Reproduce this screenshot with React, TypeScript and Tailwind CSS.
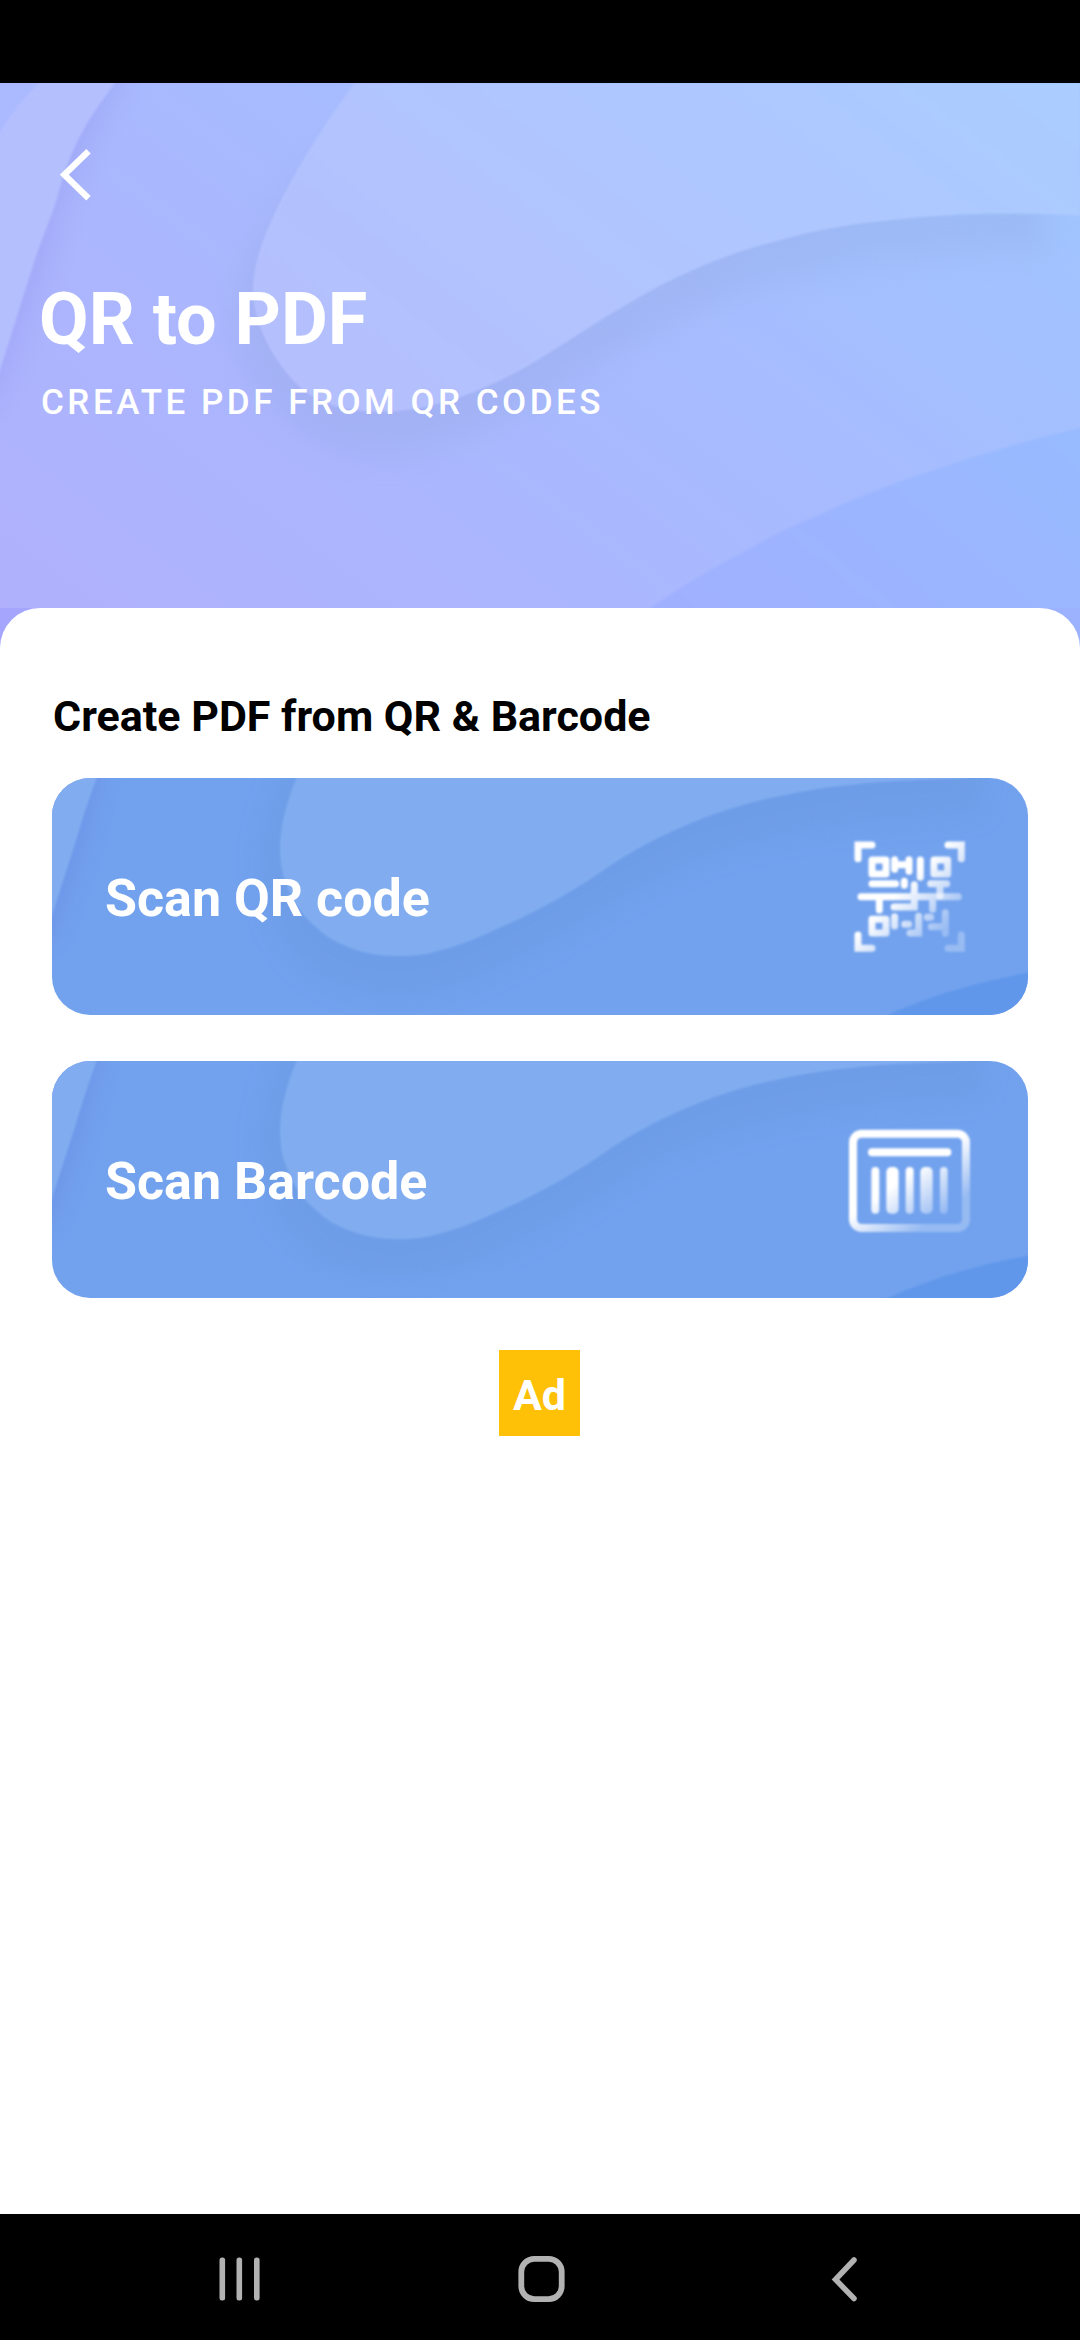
import React from "react";

const BLOB_HEADER =
  "M355 0 C322 42 290 98 274 132 C258 166 253 190 253 208 C254 238 270 276 302 306 C330 328 366 330 396 328 C450 324 503 298 540 275.500 C574 254.500 608 231.500 643 212 C682 190 730 169 781 157 C815 147 850 141 884 138 C925 133 965 130.500 1005 130.500 C1030 130.500 1055 131 1080 133 L1080 0 Z";

const BLOB_CARD =
  "M244.500 -6 L244.500 0 C234 26 228 48 228 72 C229 88 230 94 233 102 C240 124 250 137 264 149 C274 159 284 164 296 169 C311 175 328 178 345 178 C360 178 373 177 386 173 C406 168 428 159 447 150 C468 141 490 130 509 119 C528 108 545 97 562 85 C578 75 592 67 608 59 C627 50 645 42 665 35 C686 28 706 22 728 18 C750 13 774 9 798 7 C822 4 843 3 865 2 L915 0 L915 -6 Z";

function HeaderArt() {
  return (
    <svg className="absolute inset-0 h-full w-full" viewBox="0 0 1080 525" preserveAspectRatio="none" aria-hidden="true">
      <defs>
        <linearGradient id="hBase" gradientUnits="userSpaceOnUse" x1="0" y1="525" x2="641" y2="-330">
          <stop offset="0" stopColor="#b0b0fd" />
          <stop offset="0.5" stopColor="#a8bafe" />
          <stop offset="1" stopColor="#9fc6ff" />
        </linearGradient>
        <linearGradient id="hLow" gradientUnits="userSpaceOnUse" x1="650" y1="525" x2="900" y2="225">
          <stop offset="0" stopColor="#a0b0ff" />
          <stop offset="1" stopColor="#98baff" />
        </linearGradient>
        <filter id="hBlur" x="-20%" y="-30%" width="140%" height="160%">
          <feGaussianBlur stdDeviation="16" />
        </filter>
        <filter id="hBlurS" x="-40%" y="-20%" width="180%" height="140%">
          <feGaussianBlur stdDeviation="17" />
        </filter>
        <filter id="edge">
          <feGaussianBlur stdDeviation="1.300" />
        </filter>
      </defs>
      <rect width="1080" height="525" fill="url(#hBase)" />
      <path
        d="M360 30 C318 80 280 118 260 150 C242 180 232 205 232 232 C234 270 254 312 294 344 C328 370 366 376 396 374 C450 370 503 342 540 319 C574 298 608 275 643 256 C682 233 730 211 781 198 C850 179 925 170 1005 169 L1046 169 L1046 30 Z"
        fill="#8094c8"
        opacity="0.160"
        filter="url(#hBlur)"
      />
      <path d={BLOB_HEADER} fill="url(#hBase)" filter="url(#edge)" />
      <path d={BLOB_HEADER} fill="#ffffff" opacity="0.120" filter="url(#edge)" />
      <path d="M-40 -30 L132 -30 C96 36 70 90 52 150 C38 196 20 250 -10 320 L-40 320 Z" fill="#7d76e0" opacity="0.240" filter="url(#hBlurS)" />
      <path d="M-10 -10 L122 -10 C104 16 94 28 84 46 C68 74 62 98 55 122 C47 145 40 160 34 180 C22 216 12 252 -10 318 Z" fill="#b4bffe" filter="url(#edge)" />
      <path d="M-10 -10 L48 -10 L39 0 C24 16 12 28 0 50 L-10 64 Z" fill="#abbafe" filter="url(#edge)" />
      <path d="M640 531 L650 525 C682 503 714 484 747 467 C770 454 795 441 822 430.500 C853 416 884 404 919 392 C972 374 1028 356 1090 343 L1090 535 Z" fill="url(#hLow)" filter="url(#edge)" />
    </svg>
  );
}

function CardArt({ id }: { id: string }) {
  return (
    <svg className="absolute inset-0 h-full w-full" viewBox="0 0 976 237" preserveAspectRatio="none" aria-hidden="true">
      <defs>
        <filter id={id + "b"} x="-20%" y="-40%" width="140%" height="180%">
          <feGaussianBlur stdDeviation="14" />
        </filter>
        <filter id={id + "c"} x="-60%" y="-20%" width="220%" height="140%">
          <feGaussianBlur stdDeviation="10" />
        </filter>
        <filter id={id + "e"}>
          <feGaussianBlur stdDeviation="1.100" />
        </filter>
      </defs>
      <rect width="976" height="237" fill="#72a2ee" />
      <path
        d="M240 -60 L230 0 C216 30 209 60 209 90 C212 134 230 172 260 193 C286 211 320 217 345 217 C380 217 415 205 447 189 C490 169 528 145 562 124 C600 100 640 82 665 74 C740 51 830 37 932 36 L932 -60 Z"
        fill="#5f88c8"
        opacity="0.170"
        filter={`url(#${id}b)`}
      />
      <path d={BLOB_CARD} fill="#81adf0" filter={`url(#${id}e)`} />
      <path d="M-30 -30 L54 -30 C46 30 30 80 2 160 L-30 180 Z" fill="#6a80e0" opacity="0.330" filter={`url(#${id}c)`} />
      <path d="M-8 -8 L47 -8 L44.500 0 C38 18 34 30 29 46 C20 76 10 106 -4 150 L-8 150 Z" fill="#81adf0" filter={`url(#${id}e)`} />
      <path d="M820 242 L836 237 C850 230 865 225 881 219 C910 209 942 201 984 193 L984 245 Z" fill="#6097ea" filter={`url(#${id}e)`} />
    </svg>
  );
}

function QrIcon() {
  return (
    <svg className="mb-[3px] h-[150px] w-[160px]" viewBox="0 0 480 450" fill="none" aria-hidden="true">
      <defs>
        <linearGradient id="qrFade" gradientUnits="userSpaceOnUse" x1="210" y1="210" x2="338" y2="338">
          <stop offset="0" stopColor="#fff" />
          <stop offset="1" stopColor="#fff" stopOpacity="0.270" />
        </linearGradient>
        <filter id="qrSoft" filterUnits="userSpaceOnUse" x="0" y="0" width="480" height="450">
          <feGaussianBlur stdDeviation="2.500" />
        </filter>
      </defs>
      <g filter="url(#qrSoft)">
        <g stroke="url(#qrFade)" strokeWidth="21" strokeLinecap="round" strokeLinejoin="miter">
          <path d="M84 116V75H126M354 75H394V116M84 345V385H126M354 385H394V345" />
          <path d="M126 120H168V162H126ZM312 120H353V162H312ZM126 298H168V339H126Z" strokeLinejoin="round" />
          <path d="M194 119V148M237 119V154M200 134H232M271 120V172M126 191H197M223 184V196" />
          <path d="M302 191H350M330 195V228" />
          <path d="M93 230H385M148 232V270M253 194V261H192M308 232V268" />
          <path d="M194 290V318M224 313H236" />
          <path d="M266 289V339H240M292 292H302" />
          <path d="M346 278V340M304 320H344" />
        </g>
      </g>
    </svg>
  );
}

function BarcodeIcon() {
  return (
    <svg className="h-[140px] w-[160px]" viewBox="0 0 480 420" fill="none" aria-hidden="true">
      <defs>
        <linearGradient id="bcFade" gradientUnits="userSpaceOnUse" x1="235" y1="195" x2="325" y2="320">
          <stop offset="0" stopColor="#fff" />
          <stop offset="1" stopColor="#fff" stopOpacity="0.260" />
        </linearGradient>
        <filter id="bcSoft" filterUnits="userSpaceOnUse" x="0" y="0" width="480" height="420">
          <feGaussianBlur stdDeviation="2.500" />
        </filter>
      </defs>
      <g filter="url(#bcSoft)">
        <rect x="69" y="71" width="339" height="283" rx="26" stroke="url(#bcFade)" strokeWidth="24" />
        <rect x="114" y="115" width="250" height="24" rx="12" fill="#fff" />
        <g fill="url(#bcFade)">
          <rect x="124" y="171" width="24" height="140" rx="12" />
          <rect x="169" y="171" width="37" height="140" rx="15" />
          <rect x="227" y="171" width="24" height="140" rx="12" />
          <rect x="271" y="171" width="37" height="140" rx="15" />
          <rect x="330" y="171" width="23" height="140" rx="12" />
        </g>
      </g>
    </svg>
  );
}

function ScanCard({ id, label, icon }: { id: string; label: string; icon: React.ReactNode }) {
  return (
    <button className="relative flex h-[237px] w-full items-center justify-between overflow-hidden rounded-[38px] pr-[38px] pl-[53px] text-left">
      <CardArt id={id} />
      <span className="relative pt-[4px] text-[52px] leading-[60px] font-bold whitespace-nowrap text-white">{label}</span>
      <span className="relative block">{icon}</span>
    </button>
  );
}

export default function App() {
  return (
    <div className="flex h-[2340px] w-[1080px] flex-col overflow-hidden bg-white font-['Roboto',sans-serif]">
      <div className="h-[83px] shrink-0 bg-black" />
      <div className="flex flex-1 flex-col bg-linear-to-r from-[#a5a5fd] to-[#9cb2ff]">
        <header className="relative flex h-[525px] shrink-0 flex-col pl-[39px]">
          <HeaderArt />
          <svg className="relative mt-[65px] ml-[18px] h-[54px] w-[36px]" viewBox="0 0 36 54" fill="none" aria-label="Back">
            <path d="M31.500 3.200 L7.300 26.700 L31.500 50.200" stroke="#fff" strokeWidth="6.300" />
          </svg>
          <h1 className="relative mt-[76px] text-[72px] leading-[84px] font-bold whitespace-nowrap text-white">QR to PDF</h1>
          <p className="relative mt-[20px] ml-[2px] text-[35px] leading-[42px] font-medium tracking-[3.5px] whitespace-nowrap text-white">
            CREATE PDF FROM QR CODES
          </p>
        </header>
        <main className="flex flex-1 flex-col rounded-t-[40px] bg-white px-[52px] pt-[83px]">
          <h2 className="ml-[1px] text-[43px] leading-[50px] font-bold whitespace-nowrap text-black">Create PDF from QR &amp; Barcode</h2>
          <div className="mt-[37px] flex flex-col gap-[46px]">
            <ScanCard id="qr" label="Scan QR code" icon={<QrIcon />} />
            <ScanCard id="bar" label="Scan Barcode" icon={<BarcodeIcon />} />
          </div>
          <div className="mt-[52px] ml-[447px] flex h-[86px] w-[81px] items-center justify-center bg-[#ffc107] pt-[3px] text-[43px] leading-[50px] font-bold text-white">
            Ad
          </div>
        </main>
      </div>
      <nav className="flex h-[126px] shrink-0 items-center bg-black pt-[3px]">
        <svg className="ml-[219px] h-[44px] w-[42px]" viewBox="0 0 42 44" aria-hidden="true">
          <g fill="#b2b2b2">
            <rect x="0.500" y="0.500" width="5.600" height="43" rx="2.500" />
            <rect x="17.500" y="0.500" width="5.600" height="43" rx="2.500" />
            <rect x="35" y="0.500" width="5.600" height="43" rx="2.500" />
          </g>
        </svg>
        <svg className="ml-[257px] h-[48px] w-[48px]" viewBox="0 0 48 48" fill="none" aria-hidden="true">
          <rect x="3.300" y="3.800" width="40.400" height="40.400" rx="13" stroke="#b2b2b2" strokeWidth="5.800" />
        </svg>
        <svg className="ml-[264px] h-[46px] w-[30px]" viewBox="0 0 30 46" fill="none" aria-hidden="true">
          <path d="M24 4 L5.500 23.500 L24 42.500" stroke="#b2b2b2" strokeWidth="5.500" strokeLinecap="round" />
        </svg>
      </nav>
    </div>
  );
}
